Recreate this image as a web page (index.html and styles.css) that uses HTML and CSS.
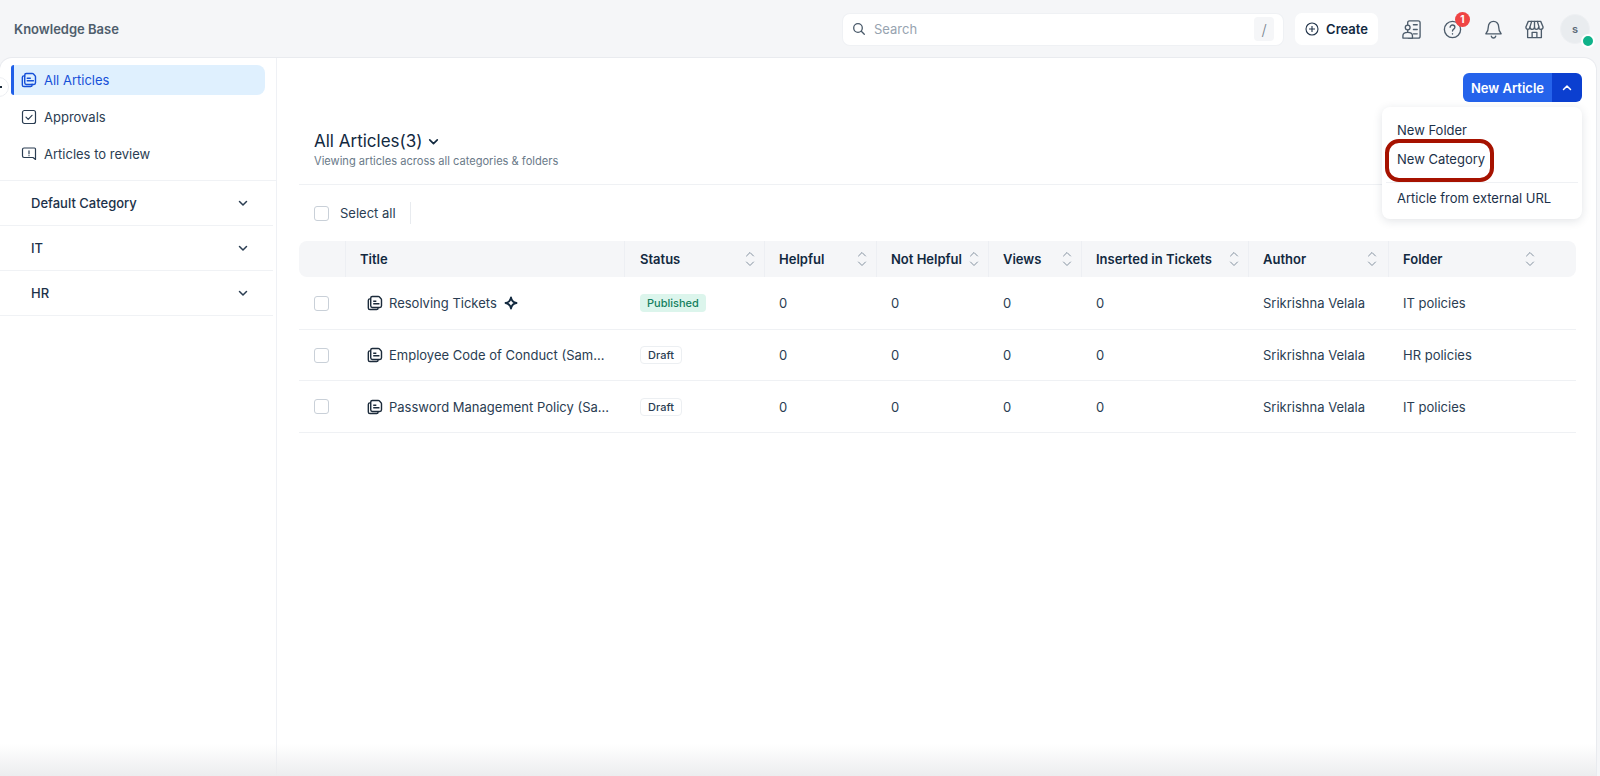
FILE: index.html
```html
<!DOCTYPE html>
<html lang="en">
<head>
<meta charset="utf-8">
<title>Knowledge Base</title>
<link rel="stylesheet" href="styles.css">
</head>
<body>
<svg class="defs" width="0" height="0" aria-hidden="true">
  <symbol id="doc" viewBox="0 0 18 18">
    <path d="M6 1.600h6.600c.5 0 .9.2 1.200.5l2 2c.3.3.5.7.5 1.200v6.900c0 1-.8 1.800-1.800 1.800H6c-1 0-1.800-.8-1.800-1.800V3.400C4.200 2.400 5 1.600 6 1.600z" fill="none" stroke="currentColor" stroke-width="1.600"/>
    <path d="M4.200 4.400H3.200c-1 0-1.700.8-1.700 1.800v8.400c0 1 .8 1.800 1.800 1.800h7.500c1 0 1.700-.7 1.700-1.700v-.9" fill="none" stroke="currentColor" stroke-width="1.600"/>
    <path d="M7 7h3.500M7 9.800h7" fill="none" stroke="currentColor" stroke-width="1.500"/>
  </symbol>
  <symbol id="chev" viewBox="0 0 12 12">
    <path d="M2.500 4.500 6 8l3.500-3.500" fill="none" stroke="currentColor" stroke-width="1.500" stroke-linecap="round" stroke-linejoin="round"/>
  </symbol>
  <symbol id="sort" viewBox="0 0 10 16">
    <path d="M1.500 5 5 1.500 8.500 5M1.500 11 5 14.500 8.500 11" fill="none" stroke="currentColor" stroke-width="1" stroke-linecap="round" stroke-linejoin="round"/>
  </symbol>
</svg>

<header class="topbar">
  <div class="brand">Knowledge Base</div>
  <div class="top-actions">
    <div class="search">
      <svg class="search-icon" viewBox="0 0 14 14"><circle cx="6" cy="6" r="4.300"/><path d="m9.300 9.300 3 3"/></svg>
      <span class="search-text">Search</span>
      <span class="slash">/</span>
    </div>
    <button class="create">
      <svg class="create-icon" viewBox="0 0 14 14"><circle cx="7" cy="7" r="6"/><path d="M7 4v6M4 7h6"/></svg>
      Create
    </button>
    <div class="top-icons">
      <svg class="top-icon" viewBox="0 0 22 22"><rect x="7" y="2" width="13" height="18" rx="2"/><path d="M13 6h4M13 11h4M13 15.500h4"/><circle cx="7" cy="9" r="2.500" fill="#f5f6f8"/><path d="M2 20v-2.500c0-2 2-3.500 5-3.500s5 1.500 5 3.500V20z" fill="#f5f6f8"/></svg>
      <div class="help">
        <svg class="top-icon" viewBox="0 0 22 22"><circle cx="11" cy="11" r="8.500"/><path d="M8.500 8.700c0-1.400 1.100-2.400 2.500-2.400s2.500 1 2.500 2.300c0 2-2.500 2-2.500 4"/><path d="M11 15.300v.4"/></svg>
        <span class="badge">1</span>
      </div>
      <svg class="top-icon" viewBox="0 0 22 22"><path d="M11 2.500c-3.300 0-5.400 2.500-5.400 5.700 0 4-1.100 5.800-2.600 7.300h16c-1.500-1.500-2.600-3.300-2.600-7.300 0-3.200-2.100-5.700-5.400-5.700z"/><path d="M8.700 18c.4 1.200 1.200 1.900 2.300 1.900s1.900-.7 2.300-1.900"/></svg>
      <svg class="top-icon" viewBox="0 0 22 22"><path d="M4.500 2.500h13l2.500 5.800c0 1.500-1.100 2.500-2.400 2.500s-2.300-1-2.300-2.300c0 1.300-1.100 2.300-2.400 2.300S11 9.800 11 8.500c0 1.300-1.100 2.300-2.400 2.300S6.300 9.800 6.200 8.500c0 1.300-1 2.300-2.300 2.300S2 9.800 2 8.300z"/><path d="M8 2.500 6.200 8.500M14 2.500l1.800 6M11 2.500v6M3.800 11v8.500h14.400V11M8.500 19.500v-5.500h5v5.500"/></svg>
      <div class="avatar"><span>s</span><i class="online"></i></div>
    </div>
  </div>
</header>

<div class="shell">
  <aside class="sidebar">
    <span class="handle"></span>
    <nav class="nav">
      <a class="nav-item active">
        <svg class="nav-icon"><use href="#doc"/></svg>All Articles
      </a>
      <a class="nav-item">
        <svg class="nav-icon" viewBox="0 0 16 16"><rect x="1.500" y="1.500" width="13" height="13" rx="2"/><path d="m5 8.200 2.200 2.200L11 6.300"/></svg>Approvals
      </a>
      <a class="nav-item">
        <svg class="nav-icon" viewBox="0 0 16 16"><path d="M3 2h10.500c.6 0 1 .4 1 1v10.500L12 11.500H3c-.8 0-1.500-.6-1.500-1.400V3.400C1.500 2.600 2.200 2 3 2z"/><path d="M8 4.800v3M8 9.500v.2"/></svg>Articles to review
      </a>
    </nav>
    <div class="cats">
      <div class="cat">Default Category<svg class="cat-chev"><use href="#chev"/></svg></div>
      <div class="cat">IT<svg class="cat-chev"><use href="#chev"/></svg></div>
      <div class="cat">HR<svg class="cat-chev"><use href="#chev"/></svg></div>
    </div>
  </aside>

  <main class="main">
    <div class="toolbar">
      <div class="split">
        <span class="split-label">New Article</span>
        <span class="split-arrow"><svg class="up"><use href="#chev"/></svg></span>
      </div>
      <div class="menu">
        <div class="menu-item">New Folder</div>
        <div class="menu-item">New Category</div>
        <hr class="menu-rule">
        <div class="menu-item">Article from external URL</div>
        <span class="highlight"></span>
      </div>
    </div>

    <section class="heading">
      <h1 class="title">All Articles(3)<svg class="title-chev"><use href="#chev"/></svg></h1>
      <p class="subtitle">Viewing articles across all categories &amp; folders</p>
    </section>

    <div class="select-row">
      <span class="check"></span>
      <span class="select-label">Select all</span>
    </div>

    <div class="table">
      <div class="thead">
        <div class="th"></div>
        <div class="th">Title</div>
        <div class="th th-status">Status<svg class="sort"><use href="#sort"/></svg></div>
        <div class="th">Helpful<svg class="sort"><use href="#sort"/></svg></div>
        <div class="th">Not Helpful<svg class="sort"><use href="#sort"/></svg></div>
        <div class="th">Views<svg class="sort"><use href="#sort"/></svg></div>
        <div class="th">Inserted in Tickets<svg class="sort"><use href="#sort"/></svg></div>
        <div class="th">Author<svg class="sort sort-author"><use href="#sort"/></svg></div>
        <div class="th">Folder<svg class="sort sort-folder"><use href="#sort"/></svg></div>
      </div>

      <div class="row">
        <div class="td td-check"><span class="check"></span></div>
        <div class="td td-title"><svg class="row-doc"><use href="#doc"/></svg><span class="row-name">Resolving Tickets</span>
          <svg class="spark" viewBox="0 0 14 14"><path d="M7 1.500c.5 3.200 2 4.800 5.500 5.500C9 7.700 7.500 9.300 7 12.500 6.500 9.300 5 7.700 1.500 7 5 6.300 6.500 4.700 7 1.500z"/></svg></div>
        <div class="td td-status"><span class="pill pill-pub">Published</span></div>
        <div class="td">0</div><div class="td">0</div><div class="td">0</div><div class="td">0</div>
        <div class="td">Srikrishna Velala</div><div class="td">IT policies</div>
      </div>

      <div class="row">
        <div class="td td-check"><span class="check"></span></div>
        <div class="td td-title"><svg class="row-doc"><use href="#doc"/></svg><span class="row-name">Employee Code of Conduct (Sam...</span></div>
        <div class="td td-status"><span class="pill pill-draft">Draft</span></div>
        <div class="td">0</div><div class="td">0</div><div class="td">0</div><div class="td">0</div>
        <div class="td">Srikrishna Velala</div><div class="td">HR policies</div>
      </div>

      <div class="row">
        <div class="td td-check"><span class="check"></span></div>
        <div class="td td-title"><svg class="row-doc"><use href="#doc"/></svg><span class="row-name">Password Management Policy (Sa...</span></div>
        <div class="td td-status"><span class="pill pill-draft">Draft</span></div>
        <div class="td">0</div><div class="td">0</div><div class="td">0</div><div class="td">0</div>
        <div class="td">Srikrishna Velala</div><div class="td">IT policies</div>
      </div>
    </div>
  </main>
  <div class="bottom-fade"></div>
</div>
</body>
</html>
```

FILE: styles.css
```css
* { box-sizing: border-box; }

html, body { height: 100%; }

body {
  margin: 0;
  display: flex;
  flex-direction: column;
  height: 776px;
  overflow: hidden;
  background: #f5f6f8;
  color: #12293f;
  font-family: Inter, "Liberation Sans", sans-serif;
  font-size: 13px;
}

.defs { position: absolute; }

/* Top bar */
.topbar {
  flex: 0 0 58px;
  display: flex;
  align-items: center;
  justify-content: space-between;
  padding: 0 10px 0 14px;
}

.brand {
  font-size: 13px;
  font-weight: 600;
  color: #4e5d6c;
}

.top-actions {
  display: flex;
  align-items: center;
}

.search {
  width: 440px;
  height: 31px;
  margin-right: 12px;
  display: flex;
  align-items: center;
  padding: 0 9px;
  background: #fff;
  border-radius: 7px;
  box-shadow: 0 0 0 1px #eff1f4;
}

.search-icon {
  width: 14px;
  height: 14px;
  margin-right: 8px;
  fill: none;
  stroke: #4a5a6a;
  stroke-width: 1.300;
  stroke-linecap: round;
}

.search-text {
  flex: 1;
  color: #97a3b0;
}

.slash {
  width: 20px;
  height: 24px;
  display: flex;
  align-items: center;
  justify-content: center;
  background: #f5f6f8;
  border-radius: 4px;
  color: #77838f;
  font-size: 15px;
  font-weight: 300;
}

.create {
  width: 83px;
  height: 32px;
  display: flex;
  align-items: center;
  justify-content: center;
  gap: 7px;
  padding: 0;
  background: #fff;
  border: 0;
  border-radius: 7px;
  color: #12293f;
  font: 600 13px Inter, "Liberation Sans", sans-serif;
}

.create-icon {
  width: 14px;
  height: 14px;
  fill: none;
  stroke: #22344a;
  stroke-width: 1.100;
}

.top-icons {
  display: flex;
  align-items: center;
  gap: 20px;
  margin-left: 23px;
}

.top-icon {
  display: block;
  width: 21px;
  height: 21px;
  fill: none;
  stroke: #4d5c6b;
  stroke-width: 1.400;
  stroke-linecap: round;
  stroke-linejoin: round;
}

.help { position: relative; }

.badge {
  position: absolute;
  top: -7px;
  left: 13px;
  width: 15px;
  height: 15px;
  display: flex;
  align-items: center;
  justify-content: center;
  background: #ef4444;
  border-radius: 50%;
  color: #fff;
  font-size: 10px;
  font-weight: 700;
}

.avatar {
  position: relative;
  width: 30px;
  height: 30px;
  margin-left: -5px;
  display: flex;
  align-items: center;
  justify-content: center;
  background: #e9ecef;
  border: 1px solid #eef0f3;
  border-radius: 50%;
  color: #5c6a78;
  font-size: 11px;
  font-weight: 600;
}

.online {
  position: absolute;
  right: -6px;
  bottom: -5px;
  width: 14px;
  height: 14px;
  background: #10b28a;
  border: 2px solid #fff;
  border-radius: 50%;
}

/* Shell */
.shell {
  position: relative;
  flex: 1;
  display: flex;
  margin-right: 4px;
  background: #fff;
  border-radius: 12px 12px 0 0;
  box-shadow: 0 0 0 1px #e9ebef;
  overflow: hidden;
}

/* Sidebar */
.sidebar {
  position: relative;
  flex: 0 0 277px;
  border-right: 1px solid #eff1f5;
}

.handle {
  position: absolute;
  top: 19px;
  left: -11px;
  width: 20px;
  height: 20px;
  background: #fff;
  border: 1px solid #eceef2;
  border-radius: 50%;
}

.handle::after {
  content: "";
  position: absolute;
  top: 8px;
  left: 10px;
  width: 2px;
  height: 2px;
  background: #1c2b3b;
}

.nav {
  height: 123px;
  padding-top: 7px;
  border-bottom: 1px solid #f0f2f5;
}

.nav-item {
  display: flex;
  align-items: center;
  height: 30px;
  margin: 0 11px 7px;
  padding-left: 10px;
  gap: 7px;
  color: #2a3d52;
  border-radius: 0 8px 8px 0;
}

.nav-item.active {
  background: #dff0fe;
  border-left: 3px solid #1f5fe8;
  border-radius: 3px 8px 8px 3px;
  padding-left: 7px;
  color: #1650d8;
}

.nav-icon {
  width: 16px;
  height: 16px;
  flex: none;
  fill: none;
  stroke: #2a3d52;
  stroke-width: 1.200;
  stroke-linecap: round;
  stroke-linejoin: round;
}

.active .nav-icon {
  stroke: none;
  color: #1650d8;
}

.cat {
  display: flex;
  align-items: center;
  justify-content: space-between;
  height: 45px;
  margin-right: 3px;
  padding: 0 24px 0 31px;
  border-bottom: 1px solid #f0f2f5;
  color: #1c3149;
  font-weight: 500;
}

.cat-chev {
  width: 12px;
  height: 12px;
  color: #2a3d52;
}

/* Main */
.main {
  flex: 1;
  min-width: 0;
  padding: 15px 20px 0 22px;
}

.toolbar {
  position: relative;
  display: flex;
  justify-content: flex-end;
  margin: 0 -6px 28px 0;
}

.split {
  display: flex;
  width: 119px;
  height: 29px;
  border-radius: 6px;
  overflow: hidden;
  color: #fff;
  font-weight: 600;
}

.split-label {
  flex: 1;
  display: flex;
  align-items: center;
  justify-content: center;
  background: #2563eb;
}

.split-arrow {
  flex: 0 0 30px;
  display: flex;
  align-items: center;
  justify-content: center;
  background: #0b3fd0;
}

.up {
  width: 12px;
  height: 12px;
  transform: rotate(180deg);
}

.menu {
  position: absolute;
  z-index: 2;
  top: 34px;
  right: 0;
  width: 200px;
  height: 112px;
  padding: 8px 4px;
  background: #fff;
  border-radius: 8px;
  box-shadow: 0 2px 10px rgba(30, 45, 70, 0.13);
}

.menu-item {
  height: 30px;
  display: flex;
  align-items: center;
  padding-left: 11px;
  color: #1c3149;
}

.menu-item:first-child { height: 29px; }

.menu-rule {
  height: 1px;
  margin: 8px 0 0;
  background: #eff1f4;
  border: 0;
}

.highlight {
  position: absolute;
  top: 32px;
  left: 3px;
  width: 109px;
  height: 43px;
  border: 4.500px solid #a61200;
  border-radius: 14px;
}

.heading {
  height: 55px;
  padding-left: 15px;
  border-bottom: 1px solid #eff1f4;
}

.title {
  display: flex;
  align-items: center;
  height: 22px;
  margin: 0;
  font-size: 17px;
  font-weight: 400;
  color: #12293f;
}

.title-chev {
  width: 13px;
  height: 13px;
  margin-left: 5px;
  color: #12293f;
}

.subtitle {
  height: 17px;
  margin: 0;
  padding-top: 1px;
  font-size: 11.100px;
  line-height: 16px;
  color: #6a7a89;
}

.select-row {
  display: flex;
  align-items: center;
  height: 56px;
  padding-left: 15px;
}

.select-label {
  height: 22px;
  display: flex;
  align-items: center;
  margin-left: 11px;
  padding-right: 14px;
  border-right: 1px solid #e8ebef;
  color: #2a3d52;
}

.check {
  flex: none;
  display: block;
  width: 15px;
  height: 15px;
  background: #fff;
  border: 1px solid #c9d0d8;
  border-radius: 3px;
}

/* Table */
.thead,
.row {
  display: grid;
  grid-template-columns: 46px 279px 140px 112px 112px 93px 167px 140px 188px;
}

.thead {
  height: 36px;
  margin-bottom: 1px;
  background: #f5f6f8;
  border-radius: 8px;
  color: #12293f;
  font-weight: 600;
}

.th {
  display: flex;
  align-items: center;
  justify-content: space-between;
  padding: 0 9px 0 14px;
  border-left: 1px solid #edeff3;
}

.th:first-child { border-left: 0; }

.th-status { padding-left: 15px; }

.sort {
  width: 10px;
  height: 16px;
  flex: none;
  color: #8492a0;
}

.sort-author { margin-right: 2px; }

.sort-folder { margin-right: 32px; }

.row {
  height: 51.700px;
  border-bottom: 1px solid #eff1f4;
  color: #2a3d52;
}

.td {
  display: flex;
  align-items: center;
  padding-left: 15px;
}

.td-status { padding-left: 16px; }

.td-title { padding-left: 22px; }

.row-doc {
  width: 16px;
  height: 16px;
  margin-right: 6px;
  flex: none;
  color: #1c2b3b;
}

.row-name { white-space: nowrap; }

.spark {
  width: 14px;
  height: 14px;
  margin-left: 7px;
  fill: none;
  stroke: #12293f;
  stroke-width: 1.800;
  stroke-linejoin: round;
}

.pill {
  display: flex;
  align-items: center;
  border-radius: 4px;
  font-size: 11px;
  font-weight: 500;
}

.pill-pub {
  height: 18px;
  padding: 0 7px;
  background: #dcf5ec;
  color: #14805e;
}

.pill-draft {
  height: 18px;
  padding: 0 7px;
  background: #fff;
  border: 1px solid #eceff2;
  color: #2a3d52;
}

.bottom-fade {
  position: absolute;
  left: 0;
  right: 0;
  bottom: 0;
  height: 32px;
  background: linear-gradient(to bottom, rgba(235, 236, 238, 0), rgba(235, 236, 238, 0.95));
  pointer-events: none;
}
```
